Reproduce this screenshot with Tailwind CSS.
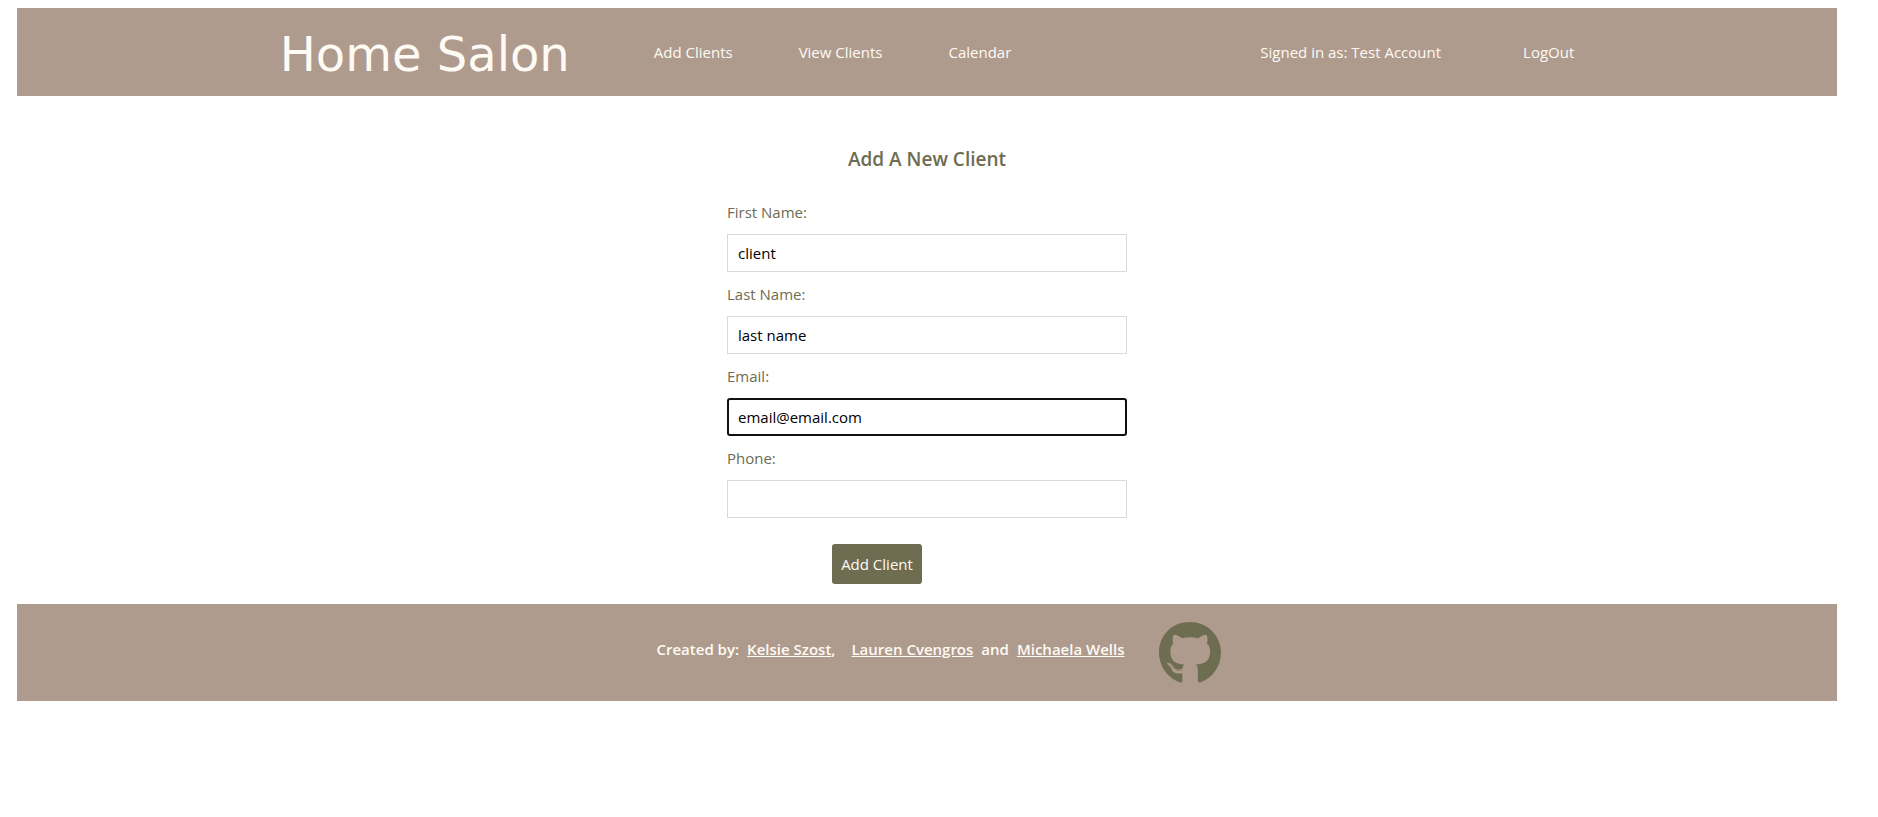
<!DOCTYPE html>
<html lang="en">
<head>
<meta charset="utf-8">
<meta name="viewport" content="width=device-width, initial-scale=1">
<title>Home Salon</title>
<script src="https://cdn.jsdelivr.net/npm/@tailwindcss/browser@4"></script>
</head>
<body class="bg-white font-['Open_Sans','Noto_Sans',sans-serif] text-[15px] leading-6 text-[#6e6c51]">
<div class="mt-2 mr-[41px] ml-[17px]">
  <header class="flex min-h-22 items-center justify-center bg-[#af9b8d] text-[#fefaf4]">
    <h1 class="mr-[84px] pt-1 font-['DejaVu_Sans',sans-serif] text-5xl">Home Salon</h1>
    <nav class="flex items-center gap-[66px]">
      <a href="#">Add Clients</a>
      <a href="#">View Clients</a>
      <a href="#">Calendar</a>
    </nav>
    <div class="ml-[249px] flex items-center gap-[82px]">
      <span>Signed in as: Test Account</span>
      <a href="#">LogOut</a>
    </div>
  </header>

  <main class="flex flex-col items-center pt-12 pb-5">
    <h2 class="text-[19px] leading-[30px] font-semibold">Add A New Client</h2>
    <form class="mt-[26px] flex w-full max-w-[400px] flex-col">
      <label for="first" class="mb-[10px]">First Name:</label>
      <input id="first" type="text" value="client" class="mb-[10px] h-[38px] border border-[#d9dadb] px-[10px] text-black">
      <label for="last" class="mb-[10px]">Last Name:</label>
      <input id="last" type="text" value="last name" class="mb-[10px] h-[38px] border border-[#d9dadb] px-[10px] text-black">
      <label for="email" class="mb-[10px]">Email:</label>
      <input id="email" type="email" value="email@email.com" class="mb-[10px] h-[38px] rounded-[3px] border-2 border-[#101010] px-[9px] text-black">
      <label for="phone" class="mb-[10px]">Phone:</label>
      <input id="phone" type="tel" class="h-[38px] border border-[#d9dadb] px-[10px] text-black">
      <button type="submit" class="mt-[26px] ml-[105px] h-10 min-w-[90px] self-start rounded-[3px] bg-[#6e6c51] px-2 font-medium text-[#fefaf4]">Add Client</button>
    </form>
  </main>

  <footer class="flex min-h-[97px] items-center justify-center bg-[#af9b8d] pl-[23px] font-semibold text-[#fefaf4]">
    <p class="mb-2 flex">
      <span class="mr-2">Created by:</span>
      <a href="#" class="underline">Kelsie Szost</a><span class="mr-4">,</span>
      <a href="#" class="mr-2 underline">Lauren Cvengros</a>
      <span class="mr-2">and</span>
      <a href="#" class="underline">Michaela Wells</a>
    </p>
    <a href="#" aria-label="GitHub" class="ml-[34px] text-[#6e6c51]">
      <svg class="h-[62px] w-[62px]" viewBox="0 0 496 496" fill="currentColor" aria-hidden="true"><path transform="translate(0 -8)" d="M165.900 397.400c0 2-2.300 3.600-5.200 3.600-3.300.3-5.600-1.300-5.600-3.600 0-2 2.300-3.600 5.200-3.600 3-.3 5.600 1.300 5.600 3.600zm-31.100-4.500c-.7 2 1.300 4.300 4.300 4.900 2.600 1 5.600 0 6.200-2s-1.300-4.300-4.300-5.200c-2.600-.7-5.500.3-6.200 2.300zm44.200-1.700c-2.900.7-4.900 2.600-4.600 4.900.3 2 2.900 3.300 5.900 2.600 2.900-.7 4.900-2.600 4.600-4.600-.3-1.900-3-3.200-5.900-2.900zM244.800 8C106.100 8 0 113.300 0 252c0 110.900 69.800 205.800 169.500 239.200 12.800 2.300 17.300-5.600 17.300-12.100 0-6.200-.3-40.400-.3-61.400 0 0-70 15-84.700-29.800 0 0-11.400-29.100-27.800-36.600 0 0-22.900-15.700 1.600-15.400 0 0 24.900 2 38.600 25.800 21.900 38.600 58.600 27.500 72.900 20.900 2.300-16 8.800-27.100 16-33.700-55.900-6.200-112.300-14.300-112.300-110.500 0-27.500 7.600-41.300 23.600-58.900-2.600-6.500-11.100-33.300 2.600-67.900 20.900-6.500 69 27 69 27 20-5.600 41.500-8.500 62.800-8.500s42.800 2.900 62.800 8.500c0 0 48.100-33.600 69-27 13.700 34.700 5.200 61.400 2.600 67.900 16 17.700 25.800 31.500 25.800 58.900 0 96.500-58.900 104.200-114.800 110.500 9.200 7.900 17 22.900 17 46.400 0 33.700-.3 75.400-.3 83.600 0 6.500 4.600 14.400 17.300 12.100C428.200 457.800 496 362.900 496 252 496 113.300 383.500 8 244.800 8zM97.200 352.900c-1.300 1-1 3.300.7 5.200 1.600 1.600 3.900 2.300 5.200 1 1.300-1 1-3.300-.7-5.200-1.600-1.600-3.900-2.300-5.200-1zm-10.800-8.100c-.7 1.300.3 2.900 2.300 3.900 1.600 1 3.600.7 4.300-.7.700-1.300-.3-2.900-2.300-3.900-2-.6-3.600-.3-4.300.7zm32.400 35.600c-1.600 1.300-1 4.300 1.300 6.200 2.300 2.300 5.200 2.600 6.500 1 1.300-1.300.7-4.300-1.300-6.200-2.200-2.300-5.200-2.600-6.500-1zm-11.400-14.700c-1.600 1-1.600 3.600 0 5.900 1.600 2.300 4.300 3.300 5.600 2.300 1.600-1.300 1.600-3.900 0-6.200-1.400-2.300-4-3.300-5.600-2z"/></svg>
    </a>
  </footer>
</div>
</body>
</html>
